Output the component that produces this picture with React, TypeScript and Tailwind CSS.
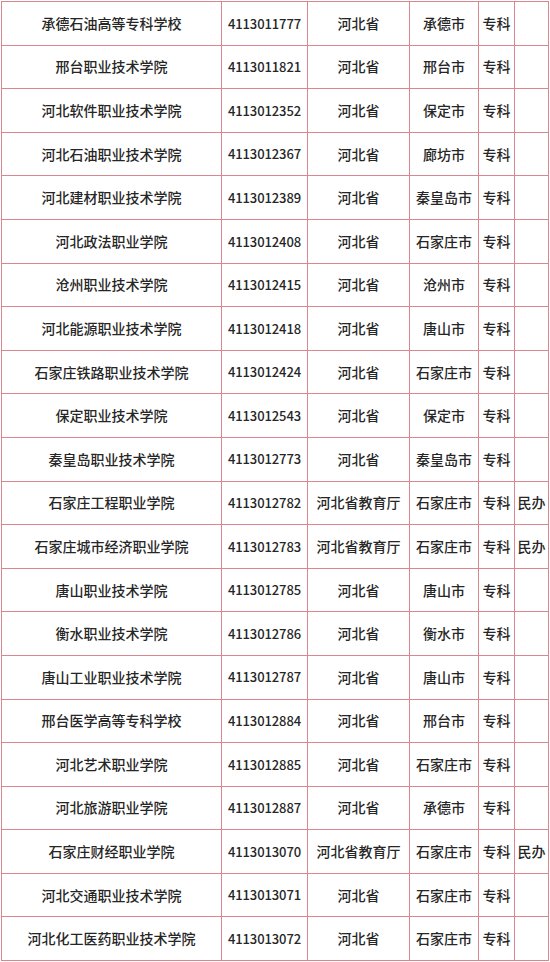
const rows: [string, string, string, string, string, string][] = [
  ["承德石油高等专科学校", "4113011777", "河北省", "承德市", "专科", ""],
  ["邢台职业技术学院", "4113011821", "河北省", "邢台市", "专科", ""],
  ["河北软件职业技术学院", "4113012352", "河北省", "保定市", "专科", ""],
  ["河北石油职业技术学院", "4113012367", "河北省", "廊坊市", "专科", ""],
  ["河北建材职业技术学院", "4113012389", "河北省", "秦皇岛市", "专科", ""],
  ["河北政法职业学院", "4113012408", "河北省", "石家庄市", "专科", ""],
  ["沧州职业技术学院", "4113012415", "河北省", "沧州市", "专科", ""],
  ["河北能源职业技术学院", "4113012418", "河北省", "唐山市", "专科", ""],
  ["石家庄铁路职业技术学院", "4113012424", "河北省", "石家庄市", "专科", ""],
  ["保定职业技术学院", "4113012543", "河北省", "保定市", "专科", ""],
  ["秦皇岛职业技术学院", "4113012773", "河北省", "秦皇岛市", "专科", ""],
  ["石家庄工程职业学院", "4113012782", "河北省教育厅", "石家庄市", "专科", "民办"],
  ["石家庄城市经济职业学院", "4113012783", "河北省教育厅", "石家庄市", "专科", "民办"],
  ["唐山职业技术学院", "4113012785", "河北省", "唐山市", "专科", ""],
  ["衡水职业技术学院", "4113012786", "河北省", "衡水市", "专科", ""],
  ["唐山工业职业技术学院", "4113012787", "河北省", "唐山市", "专科", ""],
  ["邢台医学高等专科学校", "4113012884", "河北省", "邢台市", "专科", ""],
  ["河北艺术职业学院", "4113012885", "河北省", "石家庄市", "专科", ""],
  ["河北旅游职业学院", "4113012887", "河北省", "承德市", "专科", ""],
  ["石家庄财经职业学院", "4113013070", "河北省教育厅", "石家庄市", "专科", "民办"],
  ["河北交通职业技术学院", "4113013071", "河北省", "石家庄市", "专科", ""],
  ["河北化工医药职业技术学院", "4113013072", "河北省", "石家庄市", "专科", ""],
]

const cell = "flex items-center justify-center border-r border-b border-[#d9878e] whitespace-nowrap overflow-hidden"

export default function App() {
  return (
    <div className="w-[550px] h-[962px] bg-white overflow-hidden pl-[1px] pt-[1px] font-['Noto_Sans_CJK_SC',sans-serif] font-medium text-[14px] text-[#262626]">
      <div className="grid w-[548px] grid-cols-[220px_86px_102px_69px_36px_34px] auto-rows-[43.6px] border-l border-t border-[#d9878e]">
        {rows.map((r) => (
          <div key={r[1]} className="contents">
            <div className={cell}>{r[0]}</div>
            <div className={`${cell} text-[13px] tracking-[-0.1px]`}>{r[1]}</div>
            <div className={cell}>{r[2]}</div>
            <div className={cell}>{r[3]}</div>
            <div className={cell}>{r[4]}</div>
            <div className={cell}>{r[5]}</div>
          </div>
        ))}
      </div>
    </div>
  )
}
